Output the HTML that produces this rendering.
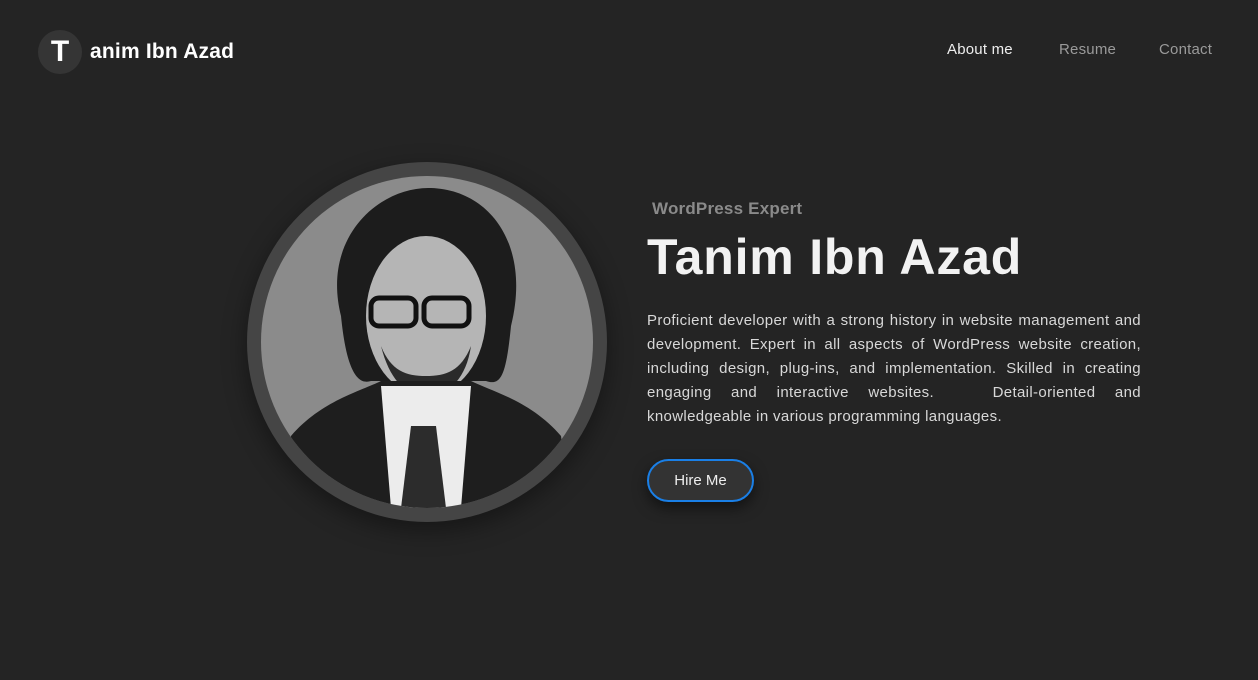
<!DOCTYPE html>
<html><head><meta charset="utf-8"><style>
*{margin:0;padding:0;box-sizing:border-box}
body{width:1258px;height:680px;background:#242424;font-family:"Liberation Sans",sans-serif;position:relative;overflow:hidden;color:#fff}
.logo{position:absolute;left:38px;top:30px;display:flex;align-items:center}
.logo .c{width:44px;height:44px;border-radius:50%;background:#353535;display:flex;align-items:center;justify-content:center;font-weight:bold;font-size:30px}
.logo span{font-weight:bold;font-size:21px;margin-left:8px;letter-spacing:0.2px}
.nav{position:absolute;top:41px;font-size:15px;color:#9a9a9a;letter-spacing:0.2px}
.photo{position:absolute;left:247px;top:162px;width:360px;height:360px;border-radius:50%;background:#454545;box-shadow:0 8px 25px rgba(0,0,0,.4)}
.inner{position:absolute;left:14px;top:14px;width:332px;height:332px;border-radius:50%;background:#8b8b8b;overflow:hidden}
.sub{position:absolute;left:652px;top:199px;font-size:17px;color:#8a8a8a;font-weight:bold;letter-spacing:0.2px}
h1{position:absolute;left:647px;top:228px;font-size:50px;font-weight:bold;color:#f2f2f2;letter-spacing:0.8px}
p{position:absolute;left:647px;top:309px;width:494px;font-size:15px;line-height:24px;color:#d8d8d8;text-align:justify;letter-spacing:0.35px}
.btn{position:absolute;left:647px;top:459px;width:107px;height:43px;border:2px solid #1a7fe6;border-radius:22px;background:#333;font-size:15px;display:flex;align-items:center;justify-content:center;color:#eee;box-shadow:0 6px 14px rgba(0,0,0,.5)}
</style></head><body>
<div class="logo"><div class="c">T</div><span>anim Ibn Azad</span></div>
<div class="nav" style="left:947px;color:#eee">About me</div>
<div class="nav" style="left:1059px">Resume</div>
<div class="nav" style="left:1159px">Contact</div>
<div class="photo"><div class="inner">
<svg width="332" height="332" viewBox="0 0 332 332">
<path d="M80 140 C60 60 120 10 170 12 C230 14 270 70 250 150 C245 200 240 210 225 205 L110 205 C95 210 85 190 80 140Z" fill="#1c1c1c"/>
<ellipse cx="165" cy="140" rx="60" ry="80" fill="#b5b5b5"/>
<path d="M120 170 C130 210 150 220 165 222 C185 220 205 205 210 170 C200 195 185 200 165 200 C145 200 130 195 120 170Z" fill="#2a2a2a"/>
<rect x="110" y="122" width="45" height="28" rx="8" fill="none" stroke="#111" stroke-width="5"/>
<rect x="163" y="122" width="45" height="28" rx="8" fill="none" stroke="#111" stroke-width="5"/>
<path d="M30 260 C60 225 100 215 120 205 L210 205 C230 215 270 225 300 260 L310 332 L20 332Z" fill="#1e1e1e"/>
<path d="M120 210 L210 210 L200 332 L130 332Z" fill="#ececec"/>
<path d="M150 250 L175 250 L185 332 L140 332Z" fill="#2c2c2c"/>
</svg></div></div>
<div class="sub">WordPress Expert</div>
<h1>Tanim Ibn Azad</h1>
<p>Proficient developer with a strong history in website management and development. Expert in all aspects of WordPress website creation, including design, plug-ins, and implementation. Skilled in creating engaging and interactive websites. &nbsp; Detail-oriented and knowledgeable in various programming languages.</p>
<div class="btn">Hire Me</div>
</body></html>
